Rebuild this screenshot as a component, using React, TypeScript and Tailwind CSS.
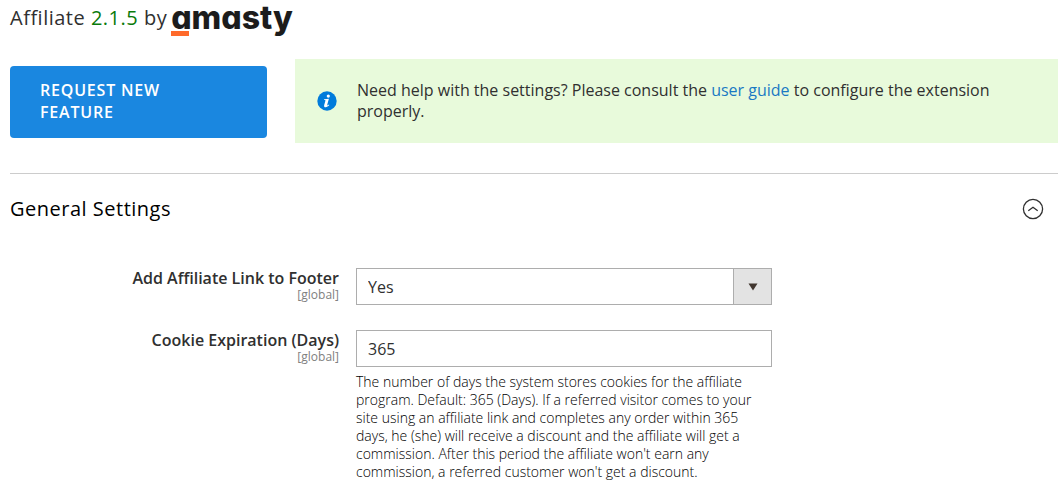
import { useState } from "react";

function Scope() {
  return <span className="text-xs leading-[14px] font-normal text-[#808080]">[global]</span>;
}

function InfoIcon() {
  return (
    <svg viewBox="0 0 20 20" className="size-5 shrink-0" aria-hidden="true">
      <circle cx="10" cy="10" r="9.7" fill="#007bdb" />
      <circle cx="11.3" cy="5.1" r="1.6" fill="#fff" />
      <path
        d="M7.2 8.3 11.9 7.8 10.3 13.6c-.2.8.1 1 .6.7l1-.7.4.5c-1.200 1.400-2.400 2.100-3.600 2.100-1.400 0-1.900-.9-1.500-2.300l1.200-4.200c.1-.4 0-.6-.4-.6h-1z"
        fill="#fff"
      />
    </svg>
  );
}

function Logo() {
  return (
    <a href="#amasty" className="relative ml-1 block tracking-normal text-[#1c1c1c]">
      <span className="block font-['Inter',sans-serif] text-[32px] leading-9 font-extrabold [font-feature-settings:'cv11']">
        amasty
      </span>
      <span className="absolute bottom-0 left-0 h-[5px] w-[18px] bg-[#ff6a2b]" />
    </a>
  );
}

export default function App() {
  const [open, setOpen] = useState(true);

  return (
    <main className="bg-white pr-1 pl-[10px] font-['Open_Sans',sans-serif] text-[#303030]">
      <header className="flex h-9 items-center text-xl tracking-wide">
        <span>
          Affiliate <span className="text-[#0a7a0a]">2.1.5</span> by
        </span>
        <Logo />
      </header>

      <section className="mt-[23px] grid grid-cols-[257fr_763fr] items-center gap-x-7">
        <button
          type="button"
          className="mt-px rounded-[4px] bg-[#1a87e0] pt-[13px] pr-12 pb-[15px] pl-[30px] text-left text-base leading-[22px] font-semibold tracking-wider text-white uppercase"
        >
          Request new feature
        </button>
        <div className="flex items-center gap-5 bg-[#e8fadb] py-[21px] pr-16 pl-[22px]">
          <InfoIcon />
          <p className="text-base leading-[21px]">
            Need help with the settings? Please consult the{" "}
            <a href="#guide" className="text-[#1979c3]">
              user guide
            </a>{" "}
            to configure the extension properly.
          </p>
        </div>
      </section>

      <section className="mt-[30px] border-t border-[#cccccc]">
        <h2>
          <button
            type="button"
            aria-expanded={open}
            onClick={() => setOpen(!open)}
            className="flex w-full items-center justify-between pt-[21px] pb-[23px] pr-[14px] text-left text-xl leading-7 font-medium tracking-wide text-black"
          >
            General Settings
            <svg
              viewBox="0 0 22 22"
              className="size-[22px]"
              fill="none"
              stroke="#303030"
              strokeWidth="1.3"
              aria-hidden="true"
            >
              <circle cx="11" cy="11" r="9.6" />
              <path d="M6.300 12.700 11 9.200l4.700 3.500" />
            </svg>
          </button>
        </h2>

        {open && (
          <div className="grid grid-cols-[329fr_416fr_269fr] gap-x-[17px] gap-y-[25px] pt-[22px]">
            <label htmlFor="footer-link" className="flex flex-col text-right text-base leading-5 font-semibold">
              Add Affiliate Link to Footer
              <Scope />
            </label>
            <div className="relative">
              <select
                id="footer-link"
                defaultValue="Yes"
                className="block h-[37px] w-full appearance-none border border-[#adadad] bg-white pr-12 pl-[11px] text-base"
              >
                <option>Yes</option>
                <option>No</option>
              </select>
              <span className="pointer-events-none absolute inset-y-0 right-0 flex w-[39px] items-center justify-center border border-[#adadad] bg-[#e3e3e3]">
                <svg viewBox="0 0 10 8" className="h-2 w-[10px]" aria-hidden="true">
                  <path d="M.5.5h9L5 7.500z" fill="#41362f" />
                </svg>
              </span>
            </div>

            <label
              htmlFor="cookie-days"
              className="col-start-1 flex flex-col text-right text-base leading-5 font-semibold"
            >
              Cookie Expiration (Days)
              <Scope />
            </label>
            <div>
              <input
                id="cookie-days"
                type="text"
                defaultValue="365"
                className="block h-[37px] w-full border border-[#adadad] bg-white px-[11px] text-base"
              />
              <p className="mt-[6px] text-sm leading-[18px] font-light text-black">
                The number of days the system stores cookies for the affiliate program. Default: 365
                (Days). If a referred visitor comes to your site using an affiliate link and completes
                any order within 365 days, he (she) will receive a discount and the affiliate will get a
                commission. After this period the affiliate won't earn any commission, a referred
                customer won't get a discount.
              </p>
            </div>
          </div>
        )}
      </section>
    </main>
  );
}
